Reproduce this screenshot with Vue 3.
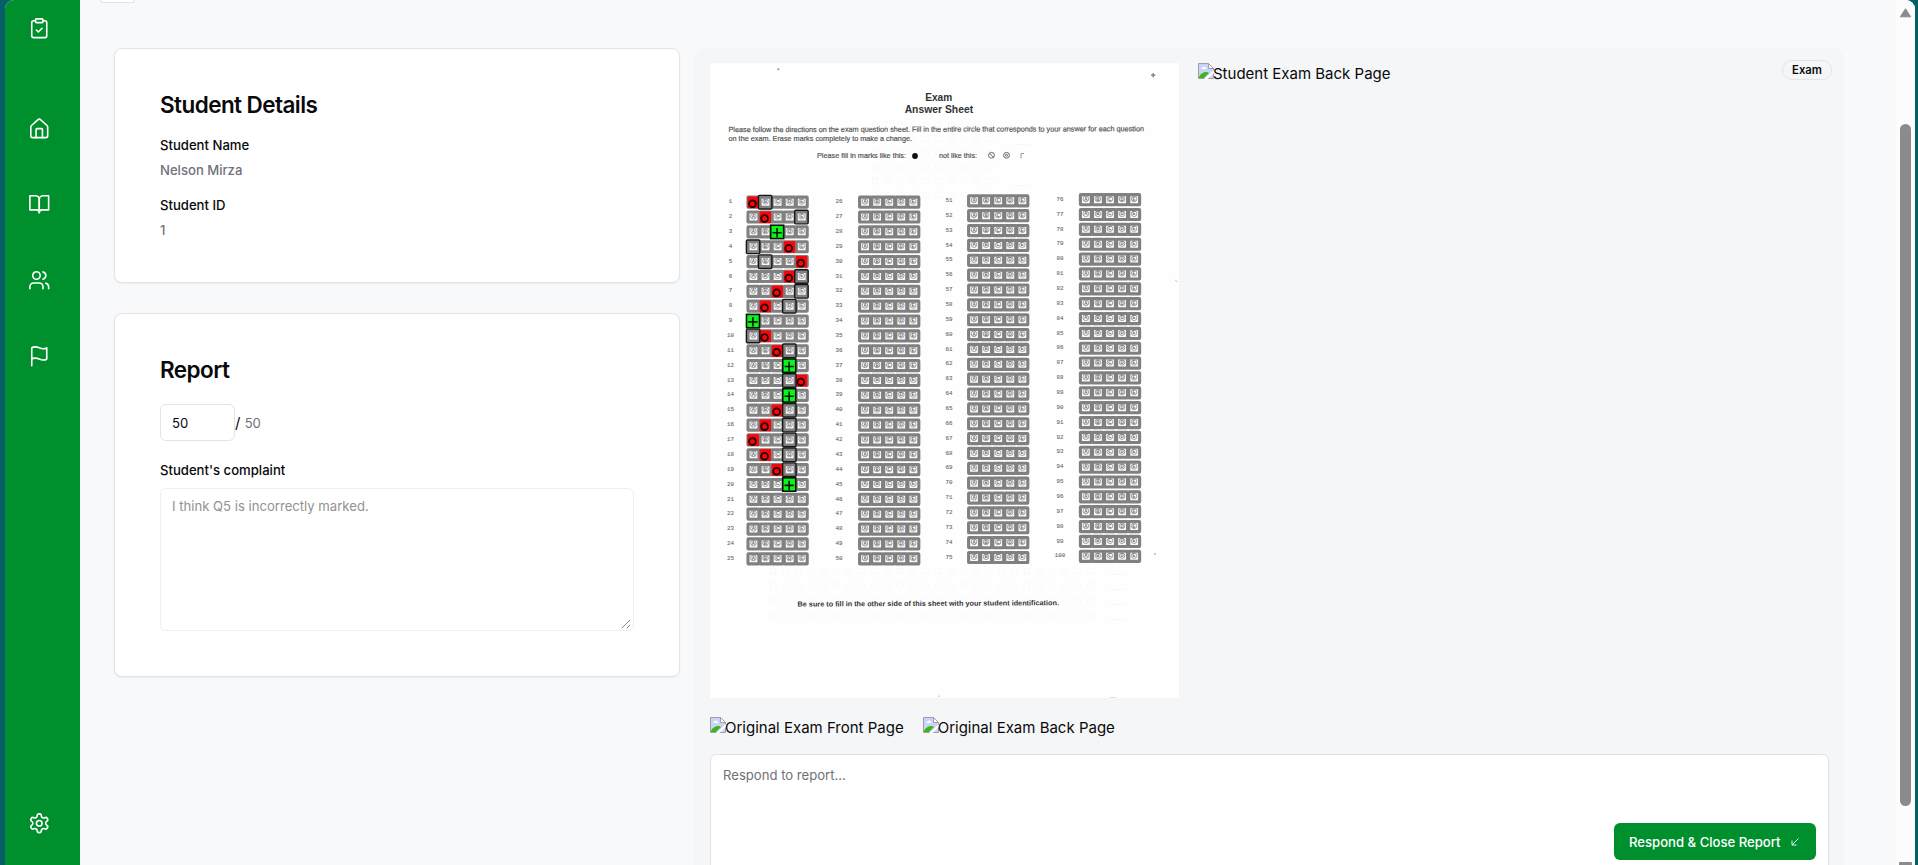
<script setup>
const letters = ['A', 'B', 'C', 'D', 'E']

// Column geometry of the scanned sheet: block left edge, first row centre, number centre
const columns = [
  { start: 1, x: 747.4, y: 202.1, pitch: 14.86, label: 730.5 },
  { start: 26, x: 859, y: 202.1, pitch: 14.86, label: 839 },
  { start: 51, x: 968, y: 200.8, pitch: 14.86, label: 949 },
  { start: 76, x: 1079.8, y: 199.6, pitch: 14.86, label: 1060 },
]
const cell = 12.08

const cells = columns.flatMap((c) =>
  Array.from({ length: 25 }, (_, r) =>
    letters.map((l, i) => ({ l, x: c.x + i * cell, y: c.y + r * c.pitch, key: `${c.start + r}${l}` }))
  ).flat()
)
const numbers = columns.flatMap((c) =>
  Array.from({ length: 25 }, (_, r) => ({ n: c.start + r, x: c.label, y: c.y + r * c.pitch + 1.2 }))
)

// [row, wrong choice, expected choice]
const wrong = [
  [1, 0, 1], [2, 1, 4], [4, 3, 0], [5, 4, 1], [6, 3, 4], [7, 2, 4], [8, 1, 3], [10, 1, 0],
  [11, 2, 3], [13, 4, 3], [15, 2, 3], [16, 1, 3], [17, 0, 3], [18, 1, 3], [19, 2, 3],
]
const right = [[3, 2], [9, 0], [12, 3], [14, 3], [20, 3]]
const px = (i) => 746.7 + i * cell
const py = (r) => 202.1 + (r - 1) * 14.86

const ghosts = []
for (let r = 0; r < 4; r++) for (let c = 0; c < 26; c++) ghosts.push([773 + c * 12.7, 571 + r * 15])
for (let r = 0; r < 6; r++) for (let c = 0; c < 10; c++) ghosts.push([875 + c * 12.7, 125 + r * 14])

const nav = ['clipboard', 'home', 'book', 'users', 'flag']
</script>

<template>
  <div class="desktop">
    <div class="window">
      <aside class="sidebar">
        <a v-for="n in nav" :key="n" class="nav" :class="n">
          <svg viewBox="0 0 24 24" width="22.5" height="22.5">
            <template v-if="n === 'clipboard'">
              <rect x="8" y="2" width="8" height="4" rx="1" />
              <path d="M16 4h2a2 2 0 0 1 2 2v14a2 2 0 0 1-2 2H6a2 2 0 0 1-2-2V6a2 2 0 0 1 2-2h2" />
              <path d="m9 14 2 2 4-4" />
            </template>
            <template v-else-if="n === 'home'">
              <path d="M3 10.6a2 2 0 0 1 .7-1.5l7-6.3a2 2 0 0 1 2.6 0l7 6.3a2 2 0 0 1 .7 1.5V20a2 2 0 0 1-2 2H5a2 2 0 0 1-2-2z" />
              <path d="M8.6 22v-8.600a1 1 0 0 1 1-1h4.800a1 1 0 0 1 1 1V22" />
            </template>
            <template v-else-if="n === 'book'">
              <path d="M2 3h6a4 4 0 0 1 4 4v14a3 3 0 0 0-3-3H2z" />
              <path d="M22 3h-6a4 4 0 0 0-4 4v14a3 3 0 0 1 3-3h7z" />
            </template>
            <template v-else-if="n === 'users'">
              <path d="M16 21v-2a4 4 0 0 0-4-4H6a4 4 0 0 0-4 4v2" />
              <circle cx="9" cy="7" r="4" />
              <path d="M22 21v-2a4 4 0 0 0-3-3.870M16 3.130a4 4 0 0 1 0 7.750" />
            </template>
            <template v-else>
              <path d="M4 15s1-1 4-1 5 2 8 2 4-1 4-1V3s-1 1-4 1-5-2-8-2-4 1-4 1zM4 22v-7" />
            </template>
          </svg>
        </a>
        <a class="nav settings">
          <svg viewBox="0 0 24 24" width="22.5" height="22.5">
            <path d="M12.22 2h-.44a2 2 0 0 0-2 2v.18a2 2 0 0 1-1 1.73l-.43.25a2 2 0 0 1-2 0l-.15-.08a2 2 0 0 0-2.73.73l-.22.38a2 2 0 0 0 .73 2.73l.15.1a2 2 0 0 1 1 1.72v.51a2 2 0 0 1-1 1.74l-.15.09a2 2 0 0 0-.73 2.73l.22.38a2 2 0 0 0 2.73.73l.15-.08a2 2 0 0 1 2 0l.43.25a2 2 0 0 1 1 1.73V20a2 2 0 0 0 2 2h.44a2 2 0 0 0 2-2v-.18a2 2 0 0 1 1-1.73l.43-.25a2 2 0 0 1 2 0l.15.08a2 2 0 0 0 2.73-.73l.22-.39a2 2 0 0 0-.73-2.73l-.15-.08a2 2 0 0 1-1-1.74v-.5a2 2 0 0 1 1-1.74l.15-.09a2 2 0 0 0 .73-2.73l-.22-.38a2 2 0 0 0-2.73-.73l-.15.08a2 2 0 0 1-2 0l-.43-.25a2 2 0 0 1-1-1.73V4a2 2 0 0 0-2-2z" />
            <circle cx="12" cy="12" r="3" />
          </svg>
        </a>
      </aside>

      <main class="main">
        <div class="back"></div>
        <div class="columns">
          <section class="left">
            <div class="card details">
              <h3>Student Details</h3>
              <p class="label">Student Name</p>
              <p class="value">Nelson Mirza</p>
              <p class="label second">Student ID</p>
              <p class="value">1</p>
            </div>
            <div class="card report">
              <h3>Report</h3>
              <div class="score">
                <div class="input">50</div>
                <span>/ <i>50</i></span>
              </div>
              <p class="label complaint">Student's complaint</p>
              <div class="area">
                I think Q5 is incorrectly marked.
                <svg class="grip" viewBox="0 0 10 10" width="10" height="10"><path d="M.8 9.2 9.2.8M5.8 9.2 9.2 5.8" /></svg>
              </div>
            </div>
          </section>

          <section class="panel">
            <div class="badge">Exam</div>
            <div class="pages">
              <svg class="sheet" viewBox="710 63 469 635" width="469" height="635">
                <rect x="710" y="63" width="469" height="635" fill="#fefefe" />
                <g fill="none" stroke="#000" stroke-opacity=".022">
                  <circle v-for="(g, i) in ghosts" :key="i" :cx="g[0]" :cy="g[1]" r="3" />
                  <path d="M1108 574.500h18m-18 15h18m-18 15h18m-18 15h18M1014 144.500h15m-15 41h15" />
                </g>
                <g fill="#888">
                  <circle cx="778.300" cy="69.300" r="1" />
                  <circle cx="939" cy="696" r=".6" />
                  <circle cx="1155" cy="554" r=".8" />
                  <path d="M1151 74.600h1.600v-1.600h1.200v1.600h1.600v1.200h-1.600v1.600h-1.200v-1.600H1151z" fill="#777" />
                  <path d="M1108 698q5-2 10 0z" fill="#ddd" />
                  <path d="M1175 280l3 2" stroke="#ccc" />
                </g>
                <g class="heading" text-anchor="middle">
                  <text x="938.700" y="100.700" textLength="27" lengthAdjust="spacingAndGlyphs">Exam</text>
                  <text x="938.900" y="113.400" textLength="68.500" lengthAdjust="spacingAndGlyphs">Answer Sheet</text>
                </g>
                <g class="copy">
                  <text x="728.500" y="132.100" textLength="415.500" lengthAdjust="spacingAndGlyphs" transform="rotate(-.12 728 132)">Please follow the directions on the exam question sheet. Fill in the entire circle that corresponds to your answer for each question</text>
                  <text x="728.500" y="141" textLength="183.500" lengthAdjust="spacingAndGlyphs">on the exam. Erase marks completely to make a change.</text>
                  <text x="817" y="158.400" textLength="89" lengthAdjust="spacingAndGlyphs">Please fill in marks like this:</text>
                  <text x="939" y="158.100" textLength="38" lengthAdjust="spacingAndGlyphs">not like this:</text>
                </g>
                <circle cx="915" cy="156" r="2.900" fill="#111" />
                <g fill="none" stroke="#666" stroke-width="1">
                  <circle cx="991.500" cy="155.300" r="2.900" />
                  <path d="m989.500 153.300 4 4" />
                  <circle cx="1006.500" cy="155.300" r="2.900" />
                  <circle cx="1006.500" cy="155.300" r="1" />
                  <path d="M1021 158.500v-5h3" stroke="#999" />
                </g>
                <g class="num">
                  <text v-for="n in numbers" :key="n.n" :x="n.x" :y="n.y">{{ n.n }}</text>
                </g>
                <g v-for="c in cells" :key="c.key">
                  <rect :x="c.x + 0.600" :y="c.y - 5" width="10.900" height="10.100" rx=".4" fill="#fafafa" stroke="#808080" stroke-width="3.100" />
                  <circle :cx="c.x + 6" :cy="c.y - 0.700" r="2.800" fill="none" stroke="#8a8a8a" stroke-width=".8" />
                  <text class="letter" :x="c.x + 6" :y="c.y + 1">{{ c.l }}</text>
                </g>
                <g v-for="w in wrong" :key="w[0]">
                  <rect :x="px(w[1]) + 0.800" :y="py(w[0]) - 5.600" width="11.400" height="11.700" fill="#fc0509" />
                  <circle :cx="px(w[1]) + 5.800" :cy="py(w[0]) + 1.600" r="3.400" fill="none" stroke="#160000" stroke-width="1.800" />
                  <rect :x="px(w[2]) - 0.300" :y="py(w[0]) - 6.700" width="13.400" height="13.600" rx="1" fill="none" stroke="#161616" stroke-width="1.400" />
                </g>
                <g v-for="g in right" :key="g[0]">
                  <rect :x="px(g[1]) - 0.200" :y="py(g[0]) - 6.600" width="13" height="13.400" fill="#0cf51a" stroke="#061006" stroke-width="1.600" />
                  <path :d="`M${px(g[1]) + 1.600} ${py(g[0]) + 0.900}h9.200m-4.600-4.700v9.400`" stroke="#031503" stroke-width="1.600" />
                </g>
                <text class="foot" x="797.500" y="606.600" textLength="261.500" lengthAdjust="spacingAndGlyphs" transform="rotate(-.3 797 606)">Be sure to fill in the other side of this sheet with your student identification.</text>
              </svg>
              <div class="missing">
                <svg class="broken" viewBox="0 0 16 16" width="16" height="16">
                  <path d="M.5 15.500V.5h10l5 5v10z" fill="#c8d4fb" stroke="#a0a0a0" />
                  <path d="M10.500.5v5h5z" fill="#fff" stroke="#a0a0a0" />
                  <path d="M3 6q0-1.500 1.500-1.500Q6 2.500 7.500 4.500 9 5 8.500 6z" fill="#fff" />
                  <path d="M1 15v-1.500Q4 9 8 9q2 0 3 1l-5 5z" fill="#3fb618" />
                  <path d="M6 16 16 7v3L9.500 16z" fill="#fff" />
                </svg>Student Exam Back Page
              </div>
            </div>
            <div class="originals">
              <div v-for="t in ['Original Exam Front Page', 'Original Exam Back Page']" :key="t" class="missing">
                <svg class="broken" viewBox="0 0 16 16" width="16" height="16">
                  <path d="M.5 15.500V.5h10l5 5v10z" fill="#c8d4fb" stroke="#a0a0a0" />
                  <path d="M10.500.5v5h5z" fill="#fff" stroke="#a0a0a0" />
                  <path d="M3 6q0-1.500 1.500-1.500Q6 2.500 7.500 4.500 9 5 8.500 6z" fill="#fff" />
                  <path d="M1 15v-1.500Q4 9 8 9q2 0 3 1l-5 5z" fill="#3fb618" />
                  <path d="M6 16 16 7v3L9.500 16z" fill="#fff" />
                </svg>{{ t }}
              </div>
            </div>
            <div class="reply">
              <span>Respond to report...</span>
              <button>
                Respond &amp; Close Report
                <svg viewBox="0 0 8 8" width="8" height="8"><path d="M7.500.5l-6.500 6.500M1 2.500V7h4.500" /></svg>
              </button>
            </div>
          </section>
        </div>
      </main>

      <div class="scroll">
        <svg viewBox="0 0 12 10" width="13" height="10"><path d="M6 .8 11.200 8.800H.8z" fill="#8b8b8b" stroke="#8b8b8b" stroke-linejoin="round" /></svg>
        <div class="thumb"></div>
        <div class="down"></div>
      </div>
    </div>
  </div>
</template>

<style>
body { overflow: hidden; }
</style>

<style scoped>
* { box-sizing: border-box; }
.desktop {
  width: 1918px; height: 865px; overflow: hidden;
  background: linear-gradient(90deg, #065f68, #036163);
  font-family: Inter, "Liberation Sans", sans-serif; color: #09090b;
}
.window {
  display: flex; width: 1910px; height: 865px; margin-left: 5px;
  border-radius: 9px 9px 0 0; overflow: hidden; background: #f8f9fb;
}
.sidebar {
  width: 75px; height: 865px; background: #008f2d;
  display: flex; flex-direction: column; align-items: center; padding: 17px 6px 31px 0;
}
.nav { height: 22.5px; margin-bottom: 53.5px; }
.nav.clipboard { margin-bottom: 77px; }
.nav.settings { margin: auto 0 0; }
.nav svg { display: block; fill: none; stroke: #fff; stroke-width: 1.7; stroke-linecap: round; stroke-linejoin: round; }
.main { flex: 1; height: 865px; padding-left: 20px; }
.back { width: 35px; height: 3px; background: #fff; border: 1px solid #e4e4e7; border-top: 0; border-radius: 0 0 6px 6px; }
.columns { display: flex; gap: 14px; padding: 45px 0 0 14px; }
.left { width: 566px; display: flex; flex-direction: column; gap: 30px; }
.card { background: #fff; border: 1px solid #e4e4e7; border-radius: 8px; padding: 39px 45px; box-shadow: 0 1px 2px rgba(0, 0, 0, .06); }
.details { height: 235px; }
.report { height: 364px; }
h3 { margin: 0; font-size: 22.5px; line-height: 34px; font-weight: 600; letter-spacing: -.5625px; }
p { margin: 0; font-size: 13.125px; line-height: 20px; }
.label { font-weight: 500; margin-top: 13px; }
.value { color: #71717a; margin-top: 5px; font-weight: 500; }
.label.second { margin-top: 15px; }
.score { display: flex; align-items: center; margin-top: 17px; font-size: 13.125px; }
.score span { font-size: 15px; line-height: 20px; white-space: nowrap; }
.score i { font-style: normal; font-size: 13.125px; color: #71717a; }
.input { width: 75px; height: 37px; border: 1px solid #e4e4e7; border-radius: 6px; padding: 1px 11px 0; line-height: 35px; }
.label.complaint { margin-top: 19px; }
.area { position: relative; height: 143px; margin-top: 8px; border: 1px solid #efeff1; border-radius: 6px; padding: 7px 11px; font-size: 13.125px; line-height: 20px; color: #929292; }
.grip { position: absolute; right: 2px; bottom: 1px; fill: none; stroke: #888; }
.panel { position: relative; width: 1150px; height: 830px; background: #f5f6f8; border-radius: 12px; padding: 15px 15px 0 16px; }
.badge { position: absolute; right: 12px; top: 12px; width: 50px; height: 20px; border: 1px solid #e4e4e7; border-radius: 10px; font-size: 11.25px; font-weight: 600; line-height: 18px; text-align: center; }
.pages { display: flex; gap: 19px; height: 635px; }
.sheet { display: block; flex: none; }
.heading { font: bold 10.500px "Liberation Sans", sans-serif; fill: #333; }
.copy { font: 7.400px "Liberation Sans", sans-serif; fill: #555; stroke: #555; stroke-width: .2px; }
.foot { font: bold 7.200px "Liberation Sans", sans-serif; fill: #333; }
.num { font: 5.800px "Liberation Mono", monospace; fill: #777; stroke: #777; stroke-width: .15px; text-anchor: middle; }
.letter { font: bold 4.500px "Liberation Sans", sans-serif; fill: #666; text-anchor: middle; }
.missing { display: flex; height: 24px; font-size: 15px; line-height: 22px; white-space: nowrap; }
.broken { flex: none; margin-right: -1px; }
.originals { display: flex; gap: 19px; height: 24px; margin-top: 19px; }
.reply { position: relative; height: 140px; margin-top: 13px; background: #fff; border: 1px solid #e0e0e6; border-radius: 6px; padding: 10px 12px; font-size: 13.125px; line-height: 20px; color: #71717a; }
button { position: absolute; right: 12px; top: 68px; width: 202px; height: 37px; display: flex; align-items: center; gap: 10px; padding: 0 0 0 15px; border: 0; border-radius: 6px; background: #008f2d; color: #fff; font: 500 13.125px Inter, sans-serif; white-space: nowrap; }
button svg { fill: none; stroke: #fff; stroke-width: .9; }
.scroll { width: 19px; background: #fcfcfc; display: flex; flex-direction: column; align-items: center; padding: 8px 0 0; }
.scroll svg { flex: none; }
.thumb { flex: none; width: 11px; height: 682px; margin-top: 106px; border-radius: 6px; background: #8b8b8b; }
.down { width: 13px; height: 3px; margin-top: 56px; background: #8b8b8b; border-radius: 1px 1px 0 0; }
</style>
